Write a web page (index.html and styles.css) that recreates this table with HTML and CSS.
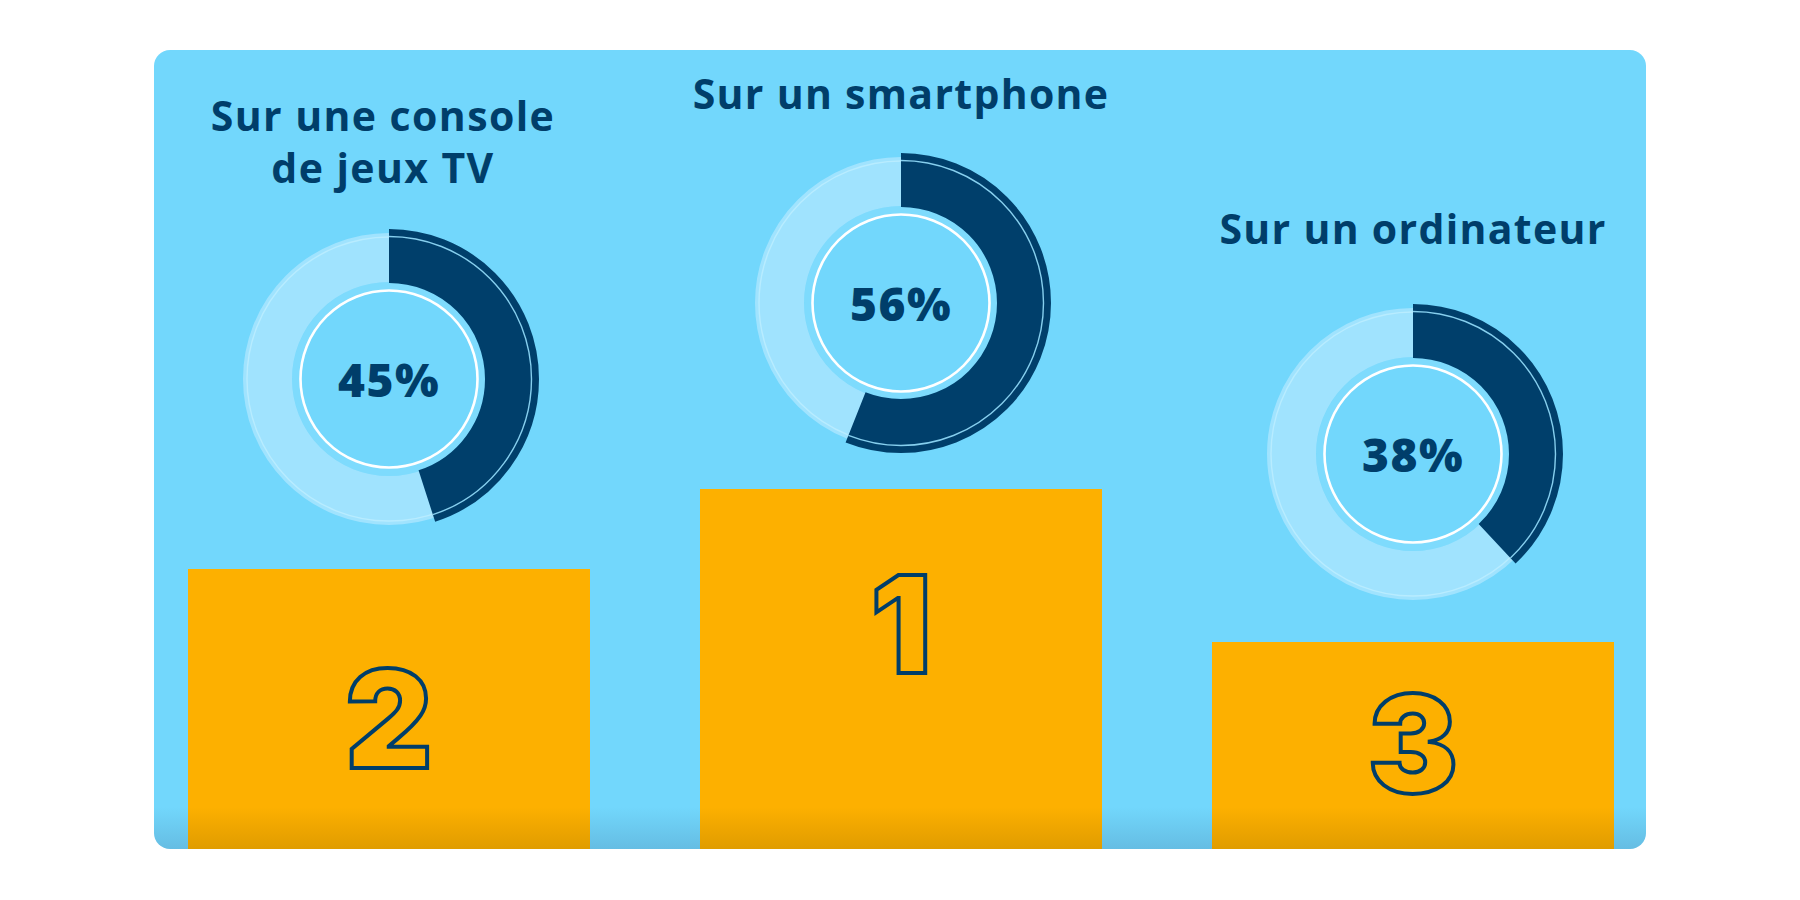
FILE: index.html
```html
<!DOCTYPE html>
<html lang="fr">
<head>
<meta charset="utf-8">
<title>Podium</title>
<link rel="stylesheet" href="styles.css">
</head>
<body>
<main class="card">
  <section class="col col--second">
    <h2 class="title">Sur une console<br>de jeux TV</h2>
    <div class="donut">
      <svg class="ring" viewBox="-152 -152 304 304" width="304" height="304">
        <circle class="ring-halo" r="93"/>
        <circle class="ring-track" r="121.5"/>
        <circle class="ring-track-line" r="142"/>
        <circle class="ring-value" r="123" stroke-dasharray="347.77 772.83" transform="rotate(-90)"/>
        <circle class="ring-value-line" r="142.5" stroke-dasharray="402.91 895.35" transform="rotate(-90)"/>
        <circle class="ring-inner" r="88.5"/>
      </svg>
      <span class="pct">45%</span>
    </div>
    <div class="step"><span class="rank">2</span></div>
  </section>

  <section class="col col--first">
    <h2 class="title">Sur un smartphone</h2>
    <div class="donut">
      <svg class="ring" viewBox="-152 -152 304 304" width="304" height="304">
        <circle class="ring-halo" r="93"/>
        <circle class="ring-track" r="121.5"/>
        <circle class="ring-track-line" r="142"/>
        <circle class="ring-value" r="123" stroke-dasharray="432.78 772.83" transform="rotate(-90)"/>
        <circle class="ring-value-line" r="142.5" stroke-dasharray="501.40 895.35" transform="rotate(-90)"/>
        <circle class="ring-inner" r="88.5"/>
      </svg>
      <span class="pct">56%</span>
    </div>
    <div class="step"><span class="rank">1</span></div>
  </section>

  <section class="col col--third">
    <h2 class="title">Sur un ordinateur</h2>
    <div class="donut">
      <svg class="ring" viewBox="-152 -152 304 304" width="304" height="304">
        <circle class="ring-halo" r="93"/>
        <circle class="ring-track" r="121.5"/>
        <circle class="ring-track-line" r="142"/>
        <circle class="ring-value" r="123" stroke-dasharray="293.68 772.83" transform="rotate(-90)"/>
        <circle class="ring-value-line" r="142.5" stroke-dasharray="340.23 895.35" transform="rotate(-90)"/>
        <circle class="ring-inner" r="88.5"/>
      </svg>
      <span class="pct">38%</span>
    </div>
    <div class="step"><span class="rank">3</span></div>
  </section>
</main>
</body>
</html>
```

FILE: styles.css
```css
* { box-sizing: border-box; }

html, body {
  margin: 0;
  padding: 0;
  background: #ffffff;
}

body {
  width: 1800px;
  height: 900px;
  overflow: hidden;
  padding-top: 50px;
  font-family: "Open Sans", "Noto Sans", sans-serif;
  color: #003e6a;
}

.card {
  width: 1492px;
  height: 799px;
  margin: 0 auto;
  border-radius: 16px;
  overflow: hidden;
  background: linear-gradient(to bottom, #72d7fc 0, #72d7fc calc(100% - 42px), #65bde3 100%);
  display: flex;
  align-items: flex-end;
  gap: 110px;
  padding: 0 32px 0 34px;
}

.col {
  width: 402px;
  flex: none;
  display: flex;
  flex-direction: column;
  align-items: center;
}

.title {
  margin: 0;
  font-size: 41px;
  line-height: 52px;
  font-weight: 700;
  text-align: center;
  white-space: nowrap;
  letter-spacing: 1.3px;
  color: #003e6a;
}

.donut {
  display: grid;
  place-items: center;
  width: 304px;
  height: 304px;
}

.donut > * {
  grid-area: 1 / 1;
}

.ring circle { fill: none; }
.ring-halo { stroke: #7edbfd; stroke-width: 8; }
.ring-track { stroke: #a0e3fe; stroke-width: 49; }
.ring-track-line { stroke: #b8ecff; stroke-width: 1.4; }
.ring-value { stroke: #003f6b; stroke-width: 54; }
.ring-value-line { stroke: #86cfee; stroke-width: 1.4; }
.ring-inner { stroke: #ffffff; stroke-width: 2.6; }

.pct {
  font-family: "Open Sans", "Noto Sans", sans-serif;
  font-weight: 800;
  font-size: 46px;
  line-height: 1;
  letter-spacing: 1.5px;
  color: #003e6a;
}

.step {
  width: 402px;
  display: flex;
  justify-content: center;
  background: linear-gradient(to bottom, #fdb000 0, #fdb000 calc(100% - 42px), #e09c00 100%);
}

.rank {
  font-family: "Inter", "Roboto", "Liberation Sans", sans-serif;
  font-weight: 900;
  font-size: 135px;
  line-height: 1;
  color: #fdb000;
  -webkit-text-stroke: 4px #003e6a;
}

/* column specifics */
.col--second .title { margin-bottom: 34px; letter-spacing: 1.4px; padding-right: 12px; }
.col--second .donut { margin-bottom: 38px; }
.col--second .step { height: 280px; padding-top: 83px; }

.col--first .title { margin-bottom: 32px; }
.col--first .donut { margin-bottom: 34px; }
.col--first .step { height: 360px; padding-top: 68px; }

.col--third .title { margin-bottom: 48px; }
.col--third .donut { margin-bottom: 36px; }
.col--third .step { height: 207px; padding-top: 35px; }
```
